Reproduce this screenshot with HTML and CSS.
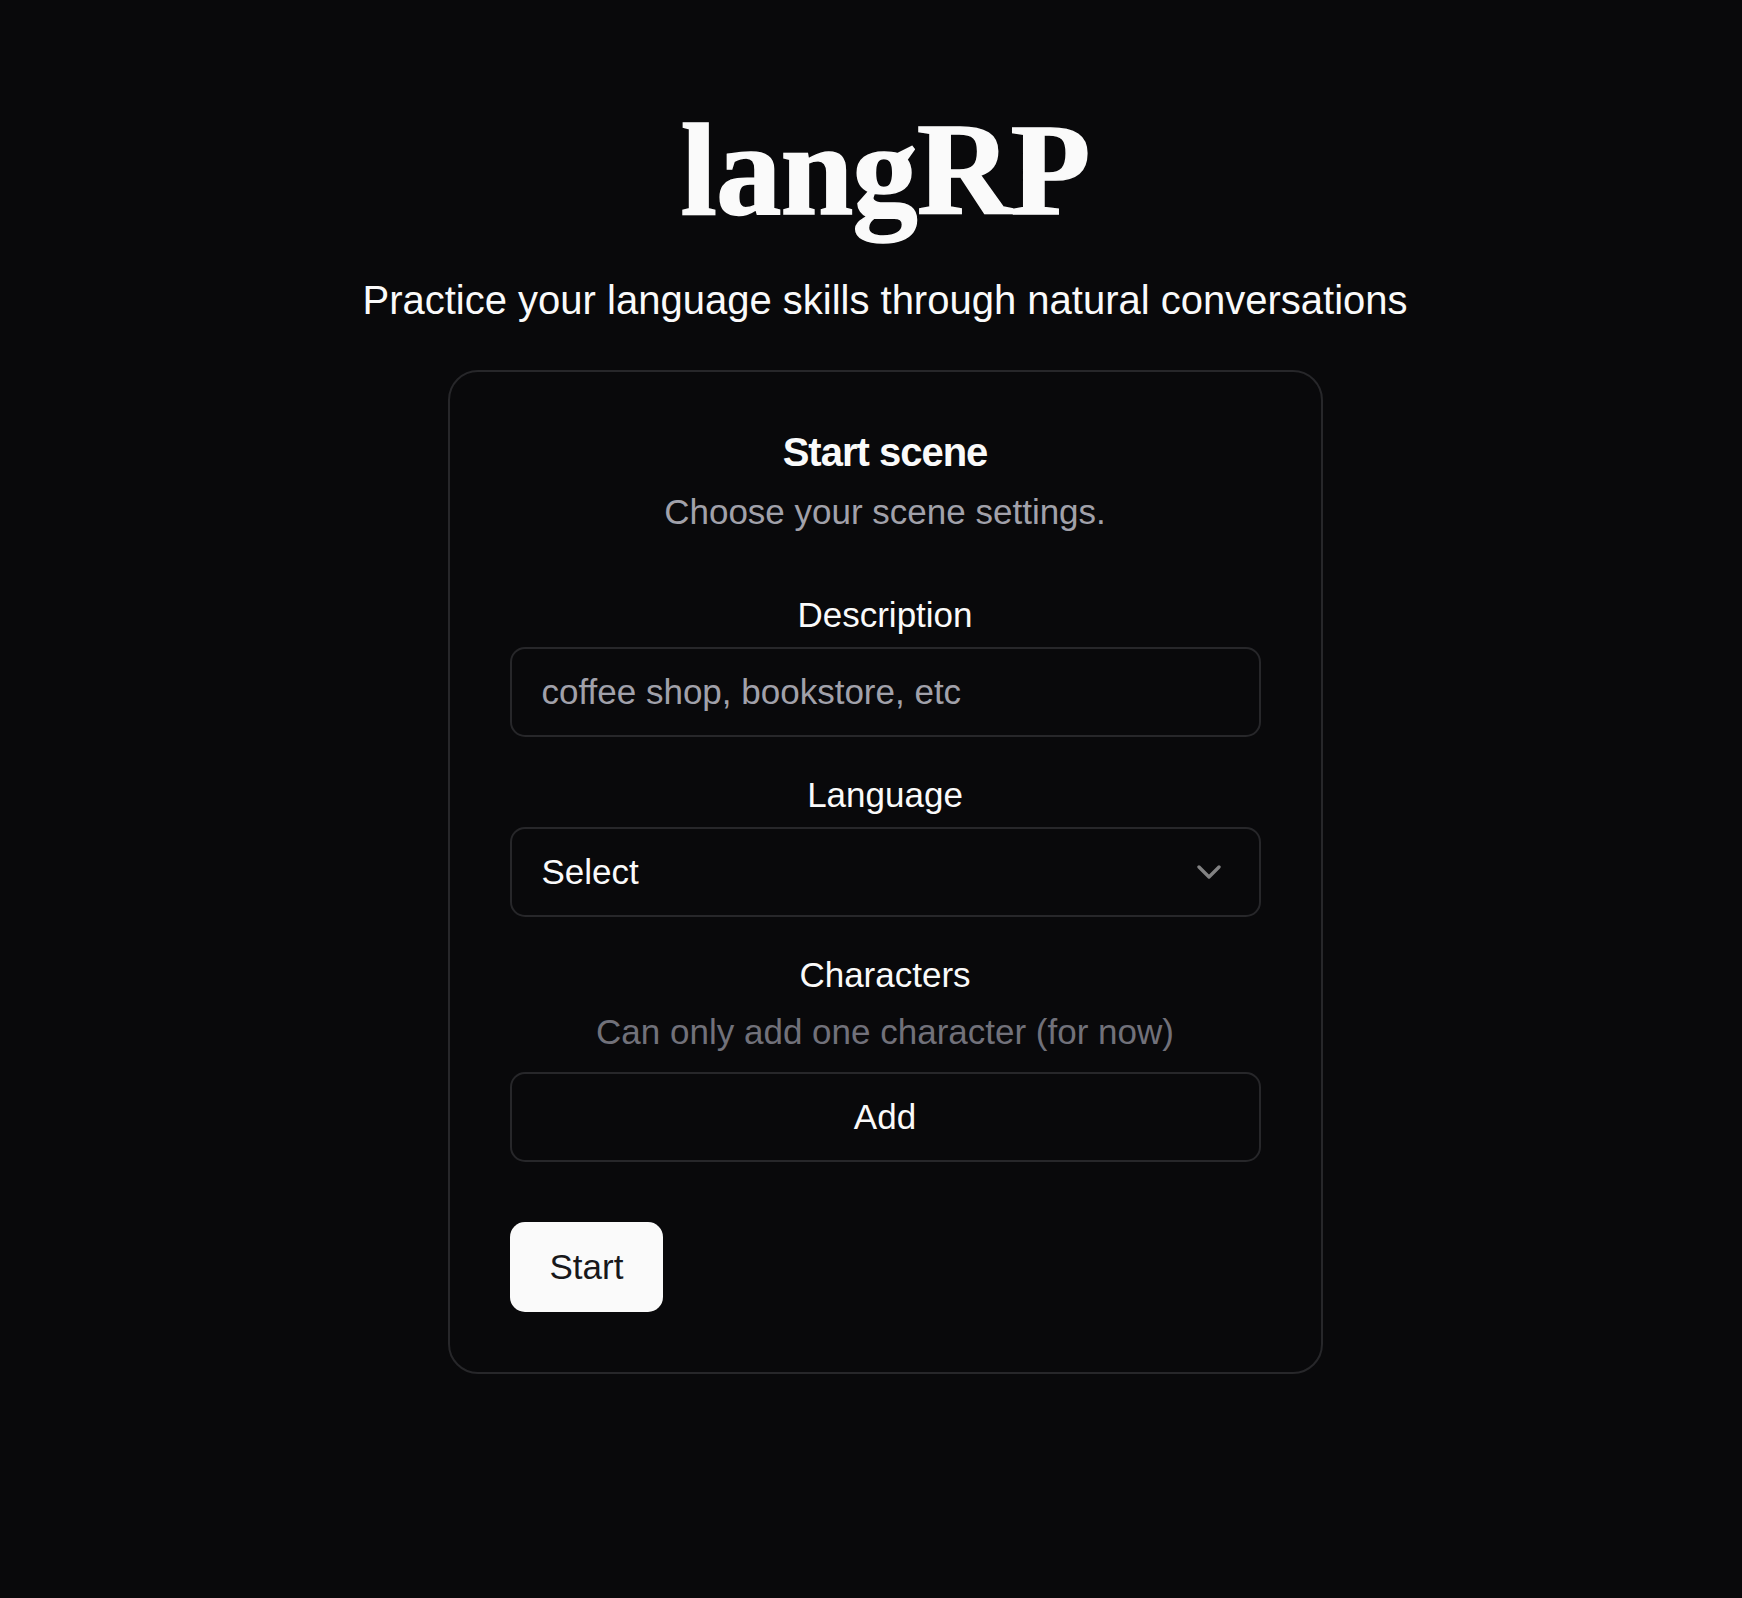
FILE: index.html
```html
<!DOCTYPE html>
<html lang="en">
<head>
<meta charset="utf-8">
<title>langRP</title>
<link rel="stylesheet" href="styles.css">
</head>
<body>
<main class="page">
  <h1 class="logo">langRP</h1>
  <p class="tagline">Practice your language skills through natural conversations</p>
  <section class="card">
    <header class="card-header">
      <h2 class="card-title">Start scene</h2>
      <p class="card-desc">Choose your scene settings.</p>
    </header>
    <div class="card-content">
      <div class="field">
        <label class="label" for="desc">Description</label>
        <input class="input" id="desc" type="text" placeholder="coffee shop, bookstore, etc">
      </div>
      <div class="field">
        <label class="label">Language</label>
        <button class="input select" type="button">
          <span>Select</span>
          <svg class="chev" viewBox="0 0 24 24" fill="none" stroke="currentColor" stroke-width="2" stroke-linecap="round" stroke-linejoin="round"><path d="m6 9 6 6 6-6"/></svg>
        </button>
      </div>
      <div class="field">
        <label class="label">Characters</label>
        <p class="hint">Can only add one character (for now)</p>
        <button class="input add" type="button">Add</button>
      </div>
    </div>
    <footer class="card-footer">
      <button class="btn-primary" type="button">Start</button>
    </footer>
  </section>
</main>
</body>
</html>
```
FILE: styles.css
```css
* { box-sizing: border-box; }
html, body { margin: 0; padding: 0; }
body {
  background: #09090b;
  color: #fafafa;
  font-family: "Liberation Sans", Arial, sans-serif;
  min-height: 1598px;
}
.page {
  display: flex;
  flex-direction: column;
  align-items: center;
  padding: 106px 0 0 28px;
}
.logo {
  margin: 0;
  font-family: "Liberation Serif", "Times New Roman", serif;
  font-weight: 700;
  font-size: 131px;
  line-height: 128px;
  letter-spacing: -1px;
  color: #fafafa;
  -webkit-text-stroke: 1.5px #fafafa;
}
.tagline {
  margin: 36px 0 0;
  font-size: 40px;
  line-height: 60px;
  color: #fafafa;
}
.card {
  margin-top: 40px;
  width: 875px;
  border: 2px solid #27272a;
  border-radius: 30px;
  background: #09090b;
}
.card-header {
  padding: 60px 60px 60px;
  display: flex;
  flex-direction: column;
  align-items: center;
  gap: 15px;
  text-align: center;
}
.card-title {
  margin: 0;
  font-size: 40px;
  line-height: 40px;
  font-weight: 700;
  letter-spacing: -1px;
}
.card-desc {
  margin: 0;
  font-size: 35px;
  line-height: 50px;
  color: #a1a1aa;
}
.card-content {
  padding: 0 60px 60px;
  display: flex;
  flex-direction: column;
  gap: 40px;
}
.field {
  display: flex;
  flex-direction: column;
  gap: 15px;
}
.label {
  display: block;
  text-align: center;
  font-size: 35px;
  line-height: 35px;
  color: #fafafa;
}
.hint {
  margin: 0;
  text-align: center;
  font-size: 35px;
  line-height: 50px;
  color: #71717a;
}
.input {
  display: flex;
  align-items: center;
  width: 100%;
  height: 90px;
  padding: 0 30px;
  border: 2px solid #27272a;
  border-radius: 15px;
  background: transparent;
  color: #fafafa;
  font-family: "Liberation Sans", Arial, sans-serif;
  font-size: 35px;
  outline: none;
}
.input::placeholder { color: #a1a1aa; }
.select {
  justify-content: space-between;
  text-align: left;
}
.chev {
  width: 40px;
  height: 40px;
  color: #fafafa;
  opacity: 0.5;
  flex: none;
}
.add {
  justify-content: center;
}
.card-footer {
  padding: 0 60px 60px;
  display: flex;
}
.btn-primary {
  height: 90px;
  padding: 0 40px;
  border: none;
  border-radius: 15px;
  background: #fafafa;
  color: #18181b;
  font-family: "Liberation Sans", Arial, sans-serif;
  font-size: 35px;
}
```
